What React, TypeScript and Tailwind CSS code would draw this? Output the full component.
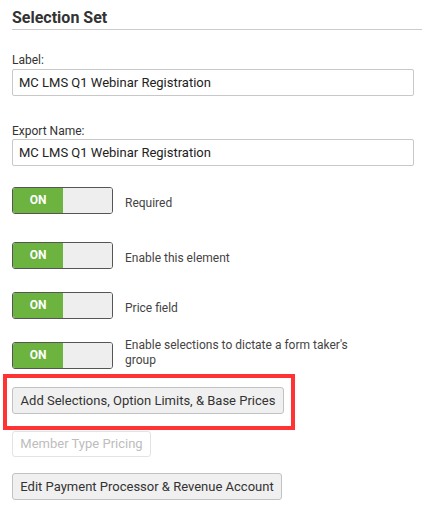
import React from "react";

function Toggle({ label, multi }: { label: string; multi?: boolean }) {
  return (
    <div className="flex items-center h-[27px]">
      <div className="flex w-[101px] h-[27px] border border-[#555] rounded-[3px] overflow-hidden shrink-0">
        <div className="w-[50px] bg-[#6cb33f] text-white font-bold text-[12px] flex items-center justify-center pb-[2px]">
          ON
        </div>
        <div className="flex-1 bg-[#eeeeee]" />
      </div>
      <div
        className={
          multi
            ? "ml-[12px] w-[232px] text-[12px] leading-[15px] text-[#444] -mt-[5px]"
            : "ml-[12px] text-[12px] leading-[15px] text-[#444] mt-[5px]"
        }
      >
        {label}
      </div>
    </div>
  );
}

export default function App() {
  return (
    <div
      className="w-[433px] h-[508px] bg-white pl-[12px] pr-[11px] text-[#333]"
      style={{ fontFamily: "Roboto, 'Liberation Sans', sans-serif" }}
    >
      <div className="pt-[8px]">
        <div className="text-[16px] font-bold leading-[20px] pb-[1px] border-b border-[#cccccc] text-[#333]">
          Selection Set
        </div>
      </div>
      <div className="mt-[22px] text-[12px] leading-[16px] text-[#333]">Label:</div>
      <div className="mt-[1px] w-[402px] h-[27px] border border-[#c8c8c8] rounded-[2px] px-[6px] flex items-center text-[13px] text-[#222]">
        MC LMS Q1 Webinar Registration
      </div>
      <div className="mt-[27px] text-[12px] leading-[16px] text-[#333]">Export Name:</div>
      <div className="mt-[0px] w-[402px] h-[27px] border border-[#c8c8c8] rounded-[2px] px-[6px] flex items-center text-[13px] text-[#222]">
        MC LMS Q1 Webinar Registration
      </div>
      <div className="mt-[21px]">
        <Toggle label="Required" />
      </div>
      <div className="mt-[28px]">
        <Toggle label="Enable this element" />
      </div>
      <div className="mt-[23px]">
        <Toggle label="Price field" />
      </div>
      <div className="mt-[23px]">
        <Toggle label="Enable selections to dictate a form taker's group" multi />
      </div>
      <div className="mt-[5px] -ml-[9px] w-[292px] border-4 border-[#ff3333] pl-[5px] pt-[9px] pb-[12px]">
        <button className="w-[272px] h-[27px] bg-[#f0f0f0] border border-[#c2c2c2] rounded-[3px] text-[13px] text-[#333] whitespace-nowrap flex items-center justify-center">
          Add Selections, Option Limits, &amp; Base Prices
        </button>
      </div>
      <button className="mt-[1px] w-[139px] h-[26px] bg-white border border-[#e3e3e3] rounded-[3px] text-[13px] text-[#bdbdbd] whitespace-nowrap flex items-center justify-center">
        Member Type Pricing
      </button>
      <button className="mt-[16px] w-[270px] h-[27px] bg-[#f0f0f0] border border-[#c2c2c2] rounded-[3px] text-[13px] text-[#333] whitespace-nowrap flex items-center justify-center">
        Edit Payment Processor &amp; Revenue Account
      </button>
    </div>
  );
}
